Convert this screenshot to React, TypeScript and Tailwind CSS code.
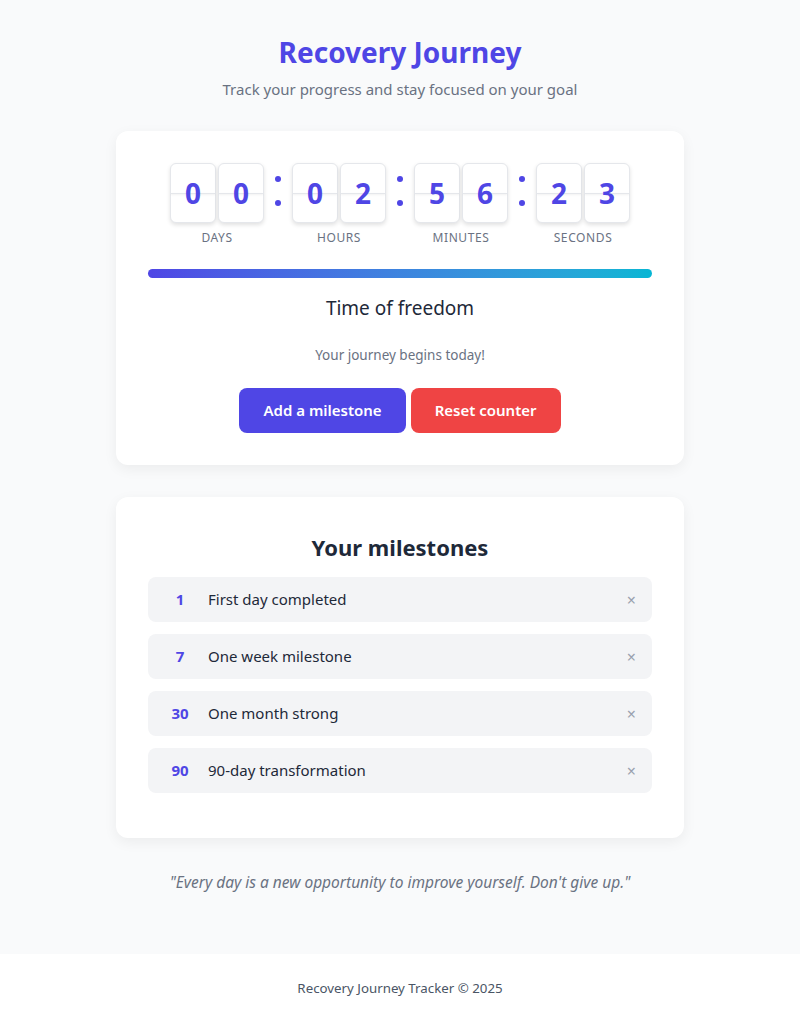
import { useState } from 'react';

// Flip-clock digit card with a thin fold line through the middle
function FlipDigit({ value }: { value: string }) {
  return (
    <div className="relative flex h-[60px] w-[46px] items-center justify-center rounded-md border border-gray-200 bg-white shadow-[0_2px_4px_rgba(0,0,0,0.12)]">
      <div className="absolute left-0 right-0 top-1/2 h-px bg-gray-200 shadow-[0_1px_2px_rgba(0,0,0,0.08)]" />
      <span className="relative text-[28px] font-bold leading-none text-[#4f46e5]">{value}</span>
    </div>
  );
}

function TimeGroup({ value, label }: { value: string; label: string }) {
  return (
    <div className="flex flex-col items-center">
      <div className="flex gap-[2px]">
        <FlipDigit value={value[0]} />
        <FlipDigit value={value[1]} />
      </div>
      <span className="mt-[7px] text-xs uppercase leading-4 tracking-wider text-gray-500">{label}</span>
    </div>
  );
}

function Colon() {
  return (
    <div className="flex h-[60px] w-7 flex-col items-center justify-center gap-[18px] pb-1">
      <span className="h-[6px] w-[6px] rounded-full bg-[#4f46e5]" />
      <span className="h-[6px] w-[6px] rounded-full bg-[#4f46e5]" />
    </div>
  );
}

const initialMilestones = [
  { days: 1, title: 'First day completed' },
  { days: 7, title: 'One week milestone' },
  { days: 30, title: 'One month strong' },
  { days: 90, title: '90-day transformation' },
];

export default function App() {
  const [milestones, setMilestones] = useState(initialMilestones);

  return (
    <div className="flex min-h-screen flex-col bg-gray-50 font-['Segoe_UI','Noto_Sans',sans-serif] text-gray-800">
      <main className="mx-auto flex w-[568px] flex-1 flex-col items-center pt-8 pb-[60px]">
        <h1 className="text-[28px] font-bold leading-10 text-[#4f46e5]">Recovery Journey</h1>
        <p className="mt-[5px] text-[15px] leading-6 text-gray-500">Track your progress and stay focused on your goal</p>

        {/* Counter card */}
        <section className="mt-[30px] flex w-full flex-col items-center rounded-xl bg-white p-8 shadow-[0_4px_14px_rgba(0,0,0,0.06)]">
          <div className="flex items-start">
            <TimeGroup value="00" label="Days" />
            <Colon />
            <TimeGroup value="02" label="Hours" />
            <Colon />
            <TimeGroup value="56" label="Minutes" />
            <Colon />
            <TimeGroup value="23" label="Seconds" />
          </div>

          <div className="mt-[23px] h-[9px] w-full rounded-full bg-gradient-to-r from-[#4f46e5] to-[#06b6d4]" />

          <h2 className="mt-4 text-[19px] leading-7 text-gray-800">Time of freedom</h2>
          <p className="mt-[23px] text-[13.5px] leading-5 text-gray-500">Your journey begins today!</p>

          <div className="mt-[23px] flex gap-[5px]">
            <button className="rounded-lg bg-[#4f46e5] px-6 py-3 text-[15px] font-semibold leading-[21px] text-white">
              Add a milestone
            </button>
            <button className="rounded-lg bg-[#ef4444] px-6 py-3 text-[15px] font-semibold leading-[21px] text-white">
              Reset counter
            </button>
          </div>
        </section>

        {/* Milestones card */}
        <section className="mt-8 w-full rounded-xl bg-white px-8 pt-[34px] pb-[45px] shadow-[0_4px_14px_rgba(0,0,0,0.06)]">
          <h2 className="mb-[14px] text-center text-[22px] font-bold leading-8 text-gray-800">Your milestones</h2>
          <ul className="flex flex-col gap-3">
            {milestones.map((m) => (
              <li key={m.days} className="flex h-[45px] items-center gap-3 rounded-lg bg-gray-100 px-4">
                <span className="w-8 text-center text-[15px] font-bold text-[#4f46e5]">{m.days}</span>
                <span className="flex-1 text-[15px] text-gray-800">{m.title}</span>
                <button
                  onClick={() => setMilestones(milestones.filter((x) => x.days !== m.days))}
                  className="text-base leading-none text-gray-400"
                >
                  ×
                </button>
              </li>
            ))}
          </ul>
        </section>

        <p className="mt-8 text-[15.5px] italic leading-6 text-gray-500">
          "Every day is a new opportunity to improve yourself. Don't give up."
        </p>
      </main>

      <footer className="bg-white py-6 text-center text-[13.3px] leading-5 text-gray-600">
        Recovery Journey Tracker © 2025
      </footer>
    </div>
  );
}
